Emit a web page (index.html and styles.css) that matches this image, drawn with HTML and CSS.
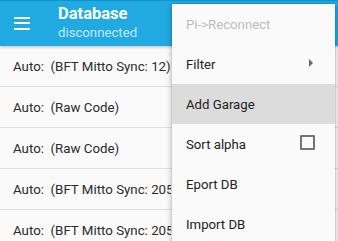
FILE: index.html
```html
<!DOCTYPE html>
<html>
<head>
<meta charset="utf-8">
<link rel="stylesheet" href="styles.css">
</head>
<body>
<div class="app">
  <header class="appbar">
    <div class="menu-btn">
      <span></span><span></span><span></span>
    </div>
    <div class="titles">
      <div class="title">Database</div>
      <div class="subtitle">disconnected</div>
    </div>
  </header>
  <ul class="list">
    <li class="row"><span class="label">Auto:&nbsp; (BFT Mitto Sync: 12)</span></li>
    <li class="row"><span class="label">Auto:&nbsp; (Raw Code)</span></li>
    <li class="row"><span class="label">Auto:&nbsp; (Raw Code)</span></li>
    <li class="row"><span class="label">Auto:&nbsp; (BFT Mitto Sync: 205)</span></li>
    <li class="row"><span class="label">Auto:&nbsp; (BFT Mitto Sync: 205)</span></li>
  </ul>
</div>
<div class="popup">
  <div class="item disabled">Pi-&gt;Reconnect</div>
  <div class="item">Filter <span class="arrow"></span></div>
  <div class="item active">Add Garage</div>
  <div class="item">Sort alpha <span class="check"></span></div>
  <div class="item">Eport DB</div>
  <div class="item">Import DB</div>
</div>
</body>
</html>
```
FILE: styles.css
```css
html, body {
  margin: 0;
  padding: 0;
  width: 338px;
  height: 241px;
  overflow: hidden;
  background: #fafafa;
  font-family: Roboto, "Noto Sans", sans-serif;
}
.app {
  display: flex;
  flex-direction: column;
}
.appbar {
  height: 45px;
  background: #21a9e1;
  border-top: 1px solid #0e94cf;
  display: flex;
  align-items: center;
  box-shadow: 0 1px 3px rgba(0,0,0,0.25);
  position: relative;
  z-index: 1;
}
.menu-btn {
  width: 16px;
  margin-left: 14px;
  margin-right: 28px;
  display: flex;
  flex-direction: column;
  gap: 3.5px;
  margin-top: -1px;
}
.menu-btn span {
  display: block;
  height: 2px;
  background: #fff;
}
.titles {
  display: flex;
  flex-direction: column;
  margin-top: -2px;
}
.title {
  color: #fff;
  font-size: 16.5px;
  font-weight: 700;
  line-height: 20px;
}
.subtitle {
  color: #c4e9f9;
  font-size: 13.2px;
  line-height: 17px;
}
.list {
  list-style: none;
  margin: 0;
  padding: 0;
}
.row {
  height: 40px;
  border-bottom: 1px solid #dedede;
  display: flex;
  align-items: center;
  padding-left: 13px;
  font-size: 13.3px;
  color: #2b2b2b;
  white-space: nowrap;
  background: #fafafa;
}
.label {
  display: block;
  max-width: 158px;
  overflow: hidden;
}
.popup {
  position: absolute;
  left: 172px;
  top: 4px;
  width: 163px;
  height: 250px;
  background: #fafafa;
  box-shadow: 0 2px 6px rgba(0,0,0,0.3), 0 0 2px rgba(0,0,0,0.15);
  z-index: 5;
  display: flex;
  flex-direction: column;
}
.item {
  height: 40px;
  flex: none;
  display: flex;
  align-items: center;
  padding-left: 14px;
  padding-right: 20px;
  font-size: 13.2px;
  color: #222;
  position: relative;
}
.item.disabled {
  color: #bdbdbd;
}
.item.active {
  background: #dcdcdc;
}
.arrow {
  position: absolute;
  right: 22px;
  top: 15px;
  width: 0;
  height: 0;
  border-left: 4px solid #666;
  border-top: 4px solid transparent;
  border-bottom: 4px solid transparent;
}
.check {
  position: absolute;
  right: 20px;
  top: 11px;
  width: 11px;
  height: 11px;
  border: 2px solid #757575;
  border-radius: 1px;
}
```
